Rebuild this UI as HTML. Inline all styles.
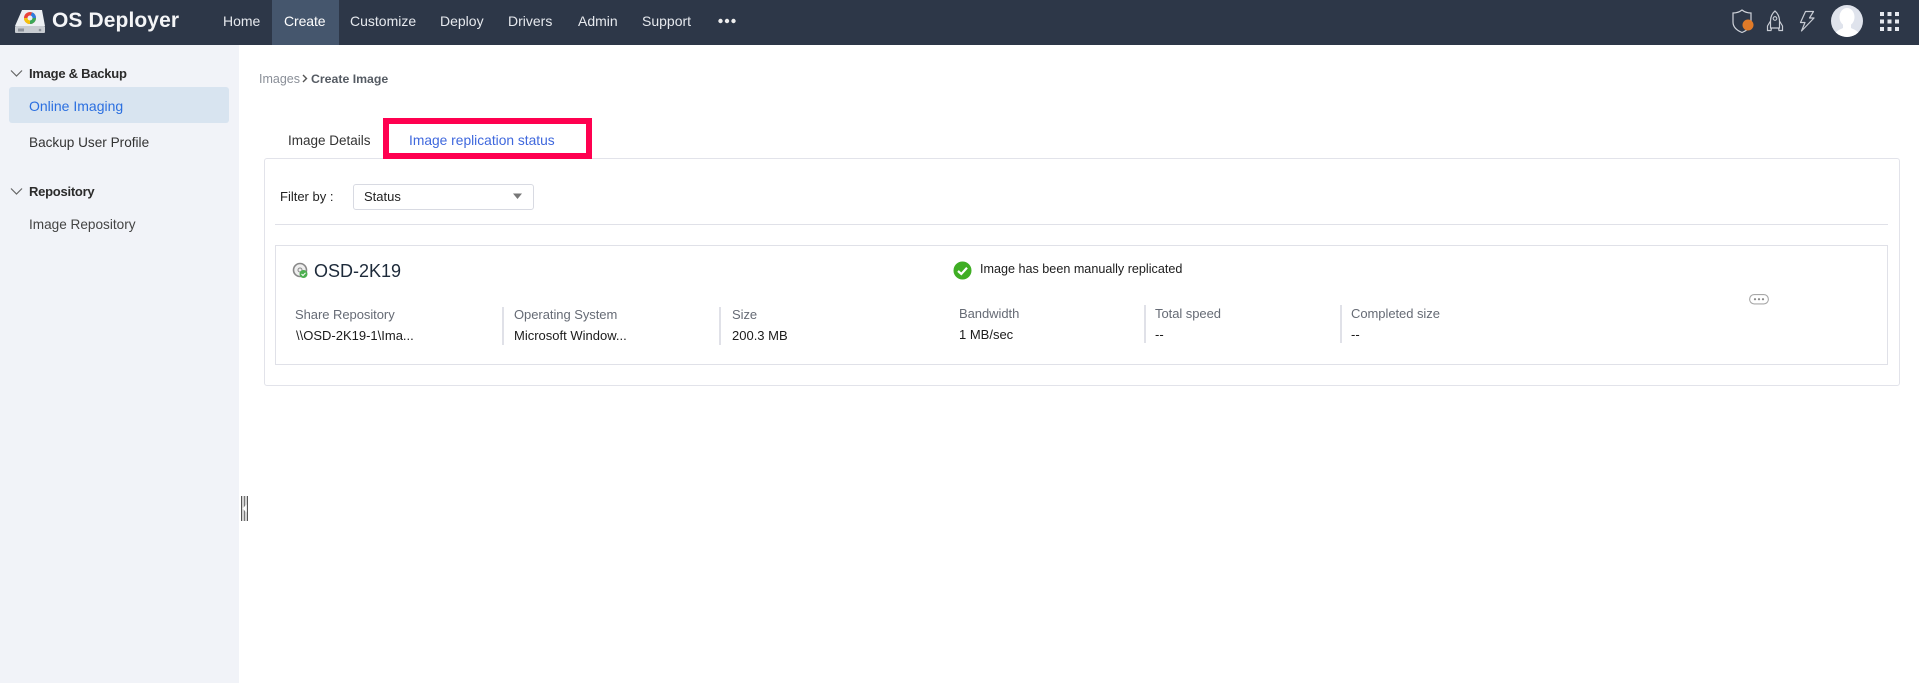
<!DOCTYPE html>
<html><head><meta charset="utf-8"><title>OS Deployer</title>
<style>
html,body{margin:0;padding:0;background:#fff}
#p{position:relative;width:1919px;height:683px;overflow:hidden;background:#fff;font-family:"Liberation Sans",sans-serif;font-size:13px;color:#222}
#p div,#p svg{position:absolute}
.t{white-space:nowrap;line-height:18px}
.n{color:#e6e9ee;top:12px;font-size:14px}
.b{font-weight:bold;color:#2b2b2b;font-size:13px;letter-spacing:-.25px}
.s{color:#333;font-size:13.6px}
.l{color:#666b75;font-size:13px;letter-spacing:-.05px}
.v{color:#1c1c1c;font-size:13px}
.sep{width:2px;background:#e0e1e8}
</style></head><body><div id="p">
<div style="left:0;top:0;width:1919px;height:45px;background:#2d3748"></div>
<div style="left:272px;top:0;width:67px;height:45px;background:#45566d"></div>
<svg style="left:14px;top:8px" width="32" height="26" viewBox="0 0 32 26"><path d="M8 2H28L31 18H1Z" fill="#eceff2"/><rect x="1" y="18" width="30" height="7" rx="1" fill="#c8ccd1"/><rect x="4" y="20.500" width="6" height="3" fill="#8d929a"/><circle cx="26" cy="22" r="1.300" fill="#8d929a"/><circle cx="16" cy="10" r="6" fill="#e8443a"/><path d="M16 10H10A6 6 0 0 0 16 16Z" fill="#f4c20d"/><path d="M16 10V16A6 6 0 0 0 22 10Z" fill="#3aa757"/><path d="M16 10H22A6 6 0 0 0 18 4.300Z" fill="#2f7de1"/><circle cx="16" cy="10" r="2.500" fill="#eceff2"/></svg>
<div class="t" style="left:52px;top:9px;font-size:21px;line-height:24px;color:#f4f5f7;font-weight:bold;letter-spacing:.1px">OS Deployer</div>
<div class="t n" style="left:223px">Home</div>
<div class="t n" style="left:284px;color:#fff;letter-spacing:-.1px">Create</div>
<div class="t n" style="left:350px">Customize</div>
<div class="t n" style="left:440px">Deploy</div>
<div class="t n" style="left:508px">Drivers</div>
<div class="t n" style="left:578px">Admin</div>
<div class="t n" style="left:642px">Support</div>
<svg style="left:717px;top:17px" width="20" height="8"><circle cx="3.500" cy="4" r="2.200" fill="#eee"/><circle cx="10" cy="4" r="2.200" fill="#eee"/><circle cx="16.500" cy="4" r="2.200" fill="#eee"/></svg>
<svg style="left:1730px;top:8px" width="26" height="26" viewBox="0 0 26 26"><path d="M12 2C9.500 4 6.500 5 3 5V14C3 19 7 22.500 12 24.500C17 22.500 21 19 21 14V5C17.500 5 14.500 4 12 2Z" fill="none" stroke="#cfd3da" stroke-width="1.200"/><circle cx="18" cy="17" r="5.500" fill="#e07a28"/></svg>
<svg style="left:1766px;top:10px" width="18" height="22" viewBox="0 0 18 22"><path d="M9 1C5.500 4 4.500 8 4.500 11V18H13.500V11C13.500 8 12.500 4 9 1Z M4.500 11 1.500 16V20.500H5L5.500 18 M13.500 11 16.500 16V20.500H13L12.500 18" fill="none" stroke="#c8ccd4" stroke-width="1.200"/><circle cx="9" cy="8.500" r="1.800" fill="none" stroke="#c8ccd4" stroke-width="1.100"/></svg>
<svg style="left:1799px;top:10px" width="16" height="22" viewBox="0 0 16 22"><path d="M6.500 1.500H14.500L10.500 8H15L2.500 21L6 12.500H1.500Z" fill="none" stroke="#c8ccd4" stroke-width="1.200" stroke-linejoin="round"/></svg>
<svg style="left:1831px;top:5px" width="32" height="32" viewBox="0 0 32 32"><defs><clipPath id="c"><circle cx="16" cy="16" r="16"/></clipPath></defs><circle cx="16" cy="16" r="16" fill="#dfe3ec"/><g clip-path="url(#c)" fill="#fff"><ellipse cx="16" cy="12" rx="7.500" ry="9"/><path d="M12 19H20V23C24 25 28 26 29 32H3C4 26 8 25 12 23Z"/></g></svg>
<svg style="left:1880px;top:12px" width="20" height="20" fill="#e6e9ef"><rect x="0" y="0" width="4" height="4"/><rect x="7.500" y="0" width="4" height="4"/><rect x="15" y="0" width="4" height="4"/><rect x="0" y="7.500" width="4" height="4"/><rect x="7.500" y="7.500" width="4" height="4"/><rect x="15" y="7.500" width="4" height="4"/><rect x="0" y="15" width="4" height="4"/><rect x="7.500" y="15" width="4" height="4"/><rect x="15" y="15" width="4" height="4"/></svg>

<div style="left:0;top:45px;width:239px;height:638px;background:#f1f3f8"></div>
<svg style="left:10px;top:69px" width="14" height="9"><path d="M1 1.500 6.500 7 12 1.500" fill="none" stroke="#666" stroke-width="1.200"/></svg>
<div class="t b" style="left:29px;top:65px">Image &amp; Backup</div>
<div style="left:9px;top:87px;width:220px;height:36px;background:#d8e4f0;border-radius:3px"></div>
<div class="t s" style="left:29px;top:97px;color:#2b6fe0;font-size:14px">Online Imaging</div>
<div class="t s" style="left:29px;top:134px">Backup User Profile</div>
<svg style="left:10px;top:187px" width="14" height="9"><path d="M1 1.500 6.500 7 12 1.500" fill="none" stroke="#666" stroke-width="1.200"/></svg>
<div class="t b" style="left:29px;top:183px">Repository</div>
<div class="t s" style="left:29px;top:216px;color:#444">Image Repository</div>
<svg style="left:241px;top:496px" width="7" height="25"><rect width="7" height="25" fill="#d4d4d4"/><rect width="1" height="25" x="0" fill="#555"/><rect width="1" height="25" x="3" fill="#777"/><rect width="1" height="25" x="6" fill="#555"/><path d="M5.500 8.500 1.500 12.500 5.500 16.500Z" fill="#fff"/></svg>

<div class="t" style="left:259px;top:70px;font-size:12.500px;color:#8a8f98">Images</div>
<svg style="left:302px;top:74px" width="6" height="10"><path d="M1 1 4.500 4.500 1 8" fill="none" stroke="#555" stroke-width="1.400"/></svg>
<div class="t" style="left:311px;top:70px;font-size:12.300px;font-weight:bold;color:#555b63">Create Image</div>

<div class="t" style="left:288px;top:132px;font-size:13.500px;color:#333">Image Details</div>
<div style="left:264px;top:158px;width:1634px;height:226px;border:1px solid #e2e3ea;border-radius:3px"></div>
<div style="left:383px;top:118px;width:197px;height:29px;border:6px solid #ff0050;background:#fff"></div>
<div class="t" style="left:409px;top:132px;font-size:13.800px;color:#3f68dd">Image replication status</div>

<div class="t" style="left:280px;top:188px;font-size:13px;color:#222">Filter by :</div>
<div style="left:353px;top:184px;width:179px;height:24px;border:1px solid #d8dae2;border-radius:3px"></div>
<div class="t" style="left:364px;top:188px;font-size:13px;color:#222">Status</div>
<svg style="left:513px;top:193px" width="10" height="7"><path d="M0 .5H9L4.500 6Z" fill="#777"/></svg>
<div style="left:275px;top:224px;width:1613px;height:1px;background:#e0e1e8"></div>

<div style="left:275px;top:245px;width:1611px;height:118px;border:1px solid #e0e1e8"></div>
<svg style="left:292px;top:262px" width="17" height="18" viewBox="0 0 17 18"><circle cx="8" cy="8" r="6.500" fill="#eee" stroke="#888" stroke-width="1.600"/><circle cx="8" cy="8" r="2" fill="none" stroke="#888"/><circle cx="11.500" cy="12" r="4" fill="#4caf50"/><path d="M9.500 12 11 13.500 13.500 10.800" fill="none" stroke="#fff"/></svg>
<div class="t" style="left:314px;top:260px;font-size:18px;line-height:22px;color:#1d2a3a">OSD-2K19</div>
<svg style="left:953px;top:261px" width="19" height="19" viewBox="0 0 19 19"><circle cx="9.500" cy="9.500" r="9" fill="#3fae24"/><path d="M5 10 8.300 13 14 6.800" fill="none" stroke="#fff" stroke-width="2.200"/></svg>
<div class="t" style="left:980px;top:260px;font-size:12.600px;color:#1c1c1c">Image has been manually replicated</div>

<div class="t l" style="left:295px;top:306px">Share Repository</div>
<div class="t v" style="left:296px;top:327px">\\OSD-2K19-1\Ima...</div>
<div class="sep" style="left:502px;top:307px;height:38px"></div>
<div class="t l" style="left:514px;top:306px">Operating System</div>
<div class="t v" style="left:514px;top:327px">Microsoft Window...</div>
<div class="sep" style="left:719px;top:307px;height:38px"></div>
<div class="t l" style="left:732px;top:306px">Size</div>
<div class="t v" style="left:732px;top:327px">200.3 MB</div>
<div class="t l" style="left:959px;top:305px">Bandwidth</div>
<div class="t v" style="left:959px;top:326px">1 MB/sec</div>
<div class="sep" style="left:1144px;top:305px;height:38px"></div>
<div class="t l" style="left:1155px;top:305px">Total speed</div>
<div class="t v" style="left:1155px;top:326px">--</div>
<div class="sep" style="left:1340px;top:305px;height:38px"></div>
<div class="t l" style="left:1351px;top:305px">Completed size</div>
<div class="t v" style="left:1351px;top:326px">--</div>
<svg style="left:1749px;top:294px" width="20" height="11"><rect x=".6" y=".6" width="18.800" height="9.300" rx="4.600" fill="#fff" stroke="#a8a8a8" stroke-width="1.100"/><circle cx="6" cy="5.200" r="1.100" fill="#888"/><circle cx="10" cy="5.200" r="1.100" fill="#888"/><circle cx="14" cy="5.200" r="1.100" fill="#888"/></svg>
</div></body></html>
